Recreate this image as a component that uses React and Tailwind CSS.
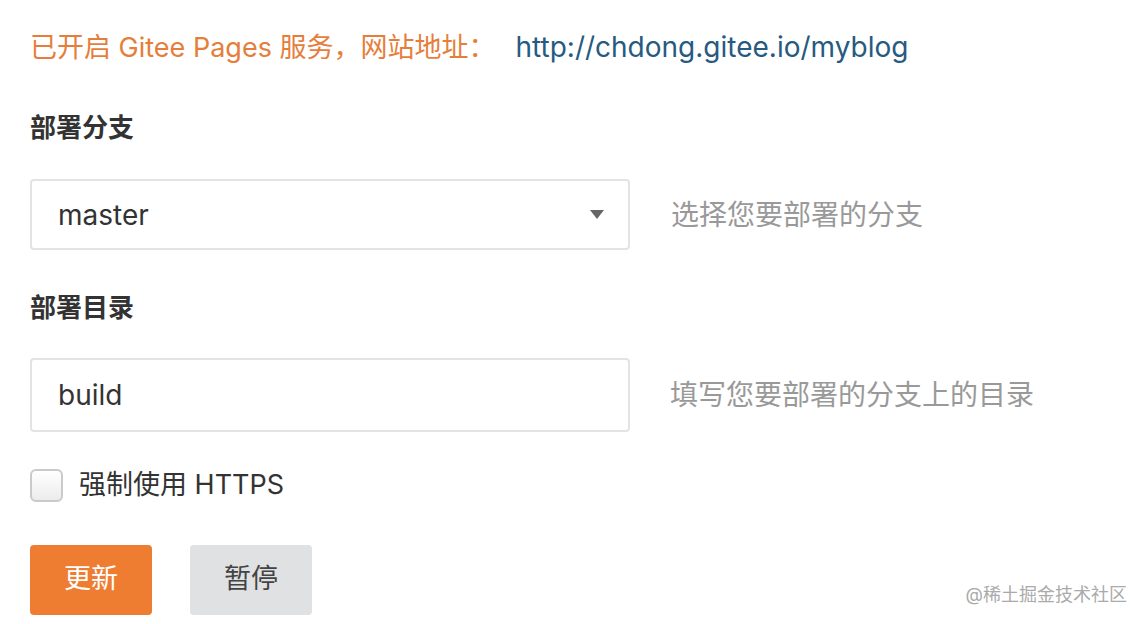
import React, { useState } from 'react';

const font = { fontFamily: 'Inter, "Noto Sans CJK SC", sans-serif' };

export default function App() {
  const [https, setHttps] = useState(false);

  return (
    <div className="relative w-[1144px] h-[624px] bg-white overflow-hidden pl-[30px]" style={font}>
      <div className="pt-[27px] h-[67px] text-[27px] leading-[40px] whitespace-nowrap">
        <span className="text-[#e67e3b]">已开启 Gitee Pages 服务，网站地址：</span>
        <a className="ml-[20px] text-[28px] text-[#275a80]" href="#">http://chdong.gitee.io/myblog</a>
      </div>

      <div className="mt-[43px] text-[26px] leading-[36px] font-bold text-[#333]">部署分支</div>
      <div className="mt-[33px] flex items-center">
        <div className="w-[600px] h-[71px] border-2 border-[#e2e3e5] rounded-[4px] flex items-center justify-between pl-[26px] pr-[24px]">
          <span className="text-[28px] text-[#333]">master</span>
          <svg width="14" height="9" viewBox="0 0 14 9">
            <path d="M0 0 H14 L7 9 Z" fill="#666" />
          </svg>
        </div>
        <span className="ml-[41px] text-[28px] text-[#999]">选择您要部署的分支</span>
      </div>

      <div className="mt-[40px] text-[26px] leading-[36px] font-bold text-[#333]">部署目录</div>
      <div className="mt-[32px] flex items-center">
        <div className="w-[600px] h-[74px] border-2 border-[#e2e3e5] rounded-[4px] flex items-center pl-[26px]">
          <span className="text-[28px] text-[#333]">build</span>
        </div>
        <span className="ml-[40px] text-[28px] text-[#999]">填写您要部署的分支上的目录</span>
      </div>

      <label className="mt-[33px] flex items-center cursor-pointer select-none">
        <span
          onClick={() => setHttps(!https)}
          className="w-[33px] h-[33px] rounded-[6px] border-2 border-[#c9cacc] bg-gradient-to-b from-white to-[#ececee]"
        />
        <span className="ml-[16px] text-[27px] text-[#333]">强制使用 HTTPS</span>
      </label>

      <div className="mt-[39px] flex gap-[38px]">
        <button className="w-[122px] h-[70px] rounded-[4px] bg-[#ef7d31] text-white text-[27px]">更新</button>
        <button className="w-[122px] h-[70px] rounded-[4px] bg-[#e0e1e3] text-[#444] text-[27px]">暂停</button>
      </div>

      <div className="absolute right-[17px] top-[583px] text-[18px] leading-[24px] text-[#aaa]">@稀土掘金技术社区</div>
    </div>
  );
}
